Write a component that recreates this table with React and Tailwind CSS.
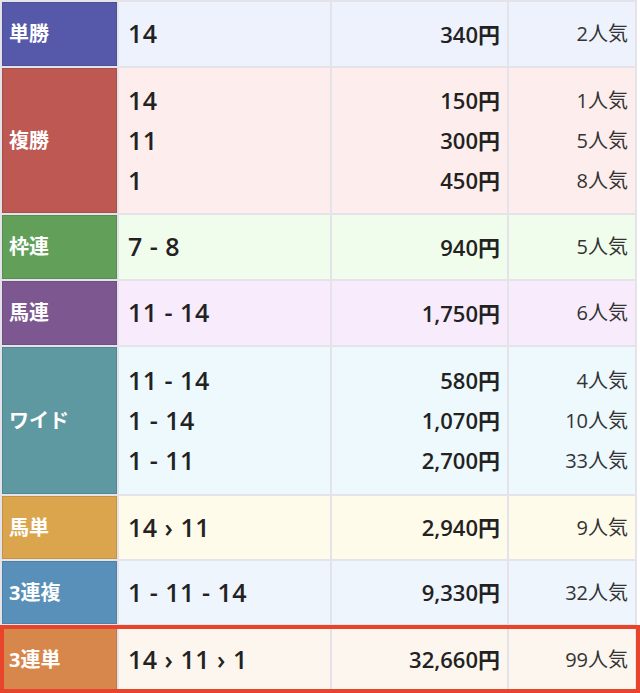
import React from 'react';

const rows = [
  { label: '単勝', h: 'h-[66px]', tag: 'bg-[#5659a9]', bg: 'bg-[#eef2fd]', items: [['14', '340円', '2人気']] },
  {
    label: '複勝', h: 'h-[147px]', tag: 'bg-[#bd5853]', bg: 'bg-[#fdeeed]',
    items: [['14', '150円', '1人気'], ['11', '300円', '5人気'], ['1', '450円', '8人気']],
  },
  { label: '枠連', h: 'h-[66px]', tag: 'bg-[#62a05a]', bg: 'bg-[#f1fdec]', items: [['7 - 8', '940円', '5人気']] },
  { label: '馬連', h: 'h-[66px]', tag: 'bg-[#7d578f]', bg: 'bg-[#f7ebfc]', items: [['11 - 14', '1,750円', '6人気']] },
  {
    label: 'ワイド', h: 'h-[149px]', tag: 'bg-[#5e98a1]', bg: 'bg-[#eef9fe]',
    items: [['11 - 14', '580円', '4人気'], ['1 - 14', '1,070円', '10人気'], ['1 - 11', '2,700円', '33人気']],
  },
  { label: '馬単', h: 'h-[65px]', tag: 'bg-[#dba54d]', bg: 'bg-[#fefbeb]', items: [['14 › 11', '2,940円', '9人気']] },
  { label: '3連複', h: 'h-[65px]', tag: 'bg-[#5890b9]', bg: 'bg-[#eef5fd]', items: [['1 - 11 - 14', '9,330円', '32人気']] },
  { label: '3連単', h: 'h-[69px]', tag: 'bg-[#d7874b]', bg: 'bg-[#fdf6ee]', items: [['14 › 11 › 1', '32,660円', '99人気']], hot: true },
];

function Row({ row }) {
  return (
    <div className={`relative flex border-b-2 border-[#e3e3e9] ${row.h}`}>
      <div className={`w-[115px] shrink-0 flex items-center pl-[6px] border border-black/10 text-white font-bold text-[20px] ${row.tag}`}>
        {row.label}
      </div>
      <div className={`w-[211px] shrink-0 ml-[2px] flex flex-col justify-center pl-[9px] ${row.bg}`}>
        {row.items.map((it, i) => (
          <div key={i} className="h-10 flex items-center text-[25px] font-semibold tracking-[0.02em] text-[#222] whitespace-pre">{it[0]}</div>
        ))}
      </div>
      <div className={`w-[175px] shrink-0 ml-[2px] flex flex-col justify-center pr-[7px] ${row.bg}`}>
        {row.items.map((it, i) => (
          <div key={i} className="h-10 flex items-center justify-end text-[22px] font-semibold text-[#222]">{it[1]}</div>
        ))}
      </div>
      <div className={`w-[126px] shrink-0 ml-[2px] flex flex-col justify-center pr-[7px] ${row.bg}`}>
        {row.items.map((it, i) => (
          <div key={i} className="h-10 flex items-center justify-end text-[20px] text-[#333]">{it[2]}</div>
        ))}
      </div>
      {row.hot && (
        <div className="absolute -left-[2px] -right-[5px] -top-[1px] bottom-0 border-4 border-[#e8442b] pointer-events-none" />
      )}
    </div>
  );
}

export default function App() {
  return (
    <div className="w-[640px] h-[693px] bg-white overflow-hidden" style={{ fontFamily: '"Open Sans", "Noto Sans CJK JP", sans-serif' }}>
      <div className="w-[637px] border-t-2 border-x-2 border-[#e3e3e9] bg-[#e3e3e9]">
        {rows.map((r) => (
          <Row key={r.label} row={r} />
        ))}
      </div>
    </div>
  );
}
